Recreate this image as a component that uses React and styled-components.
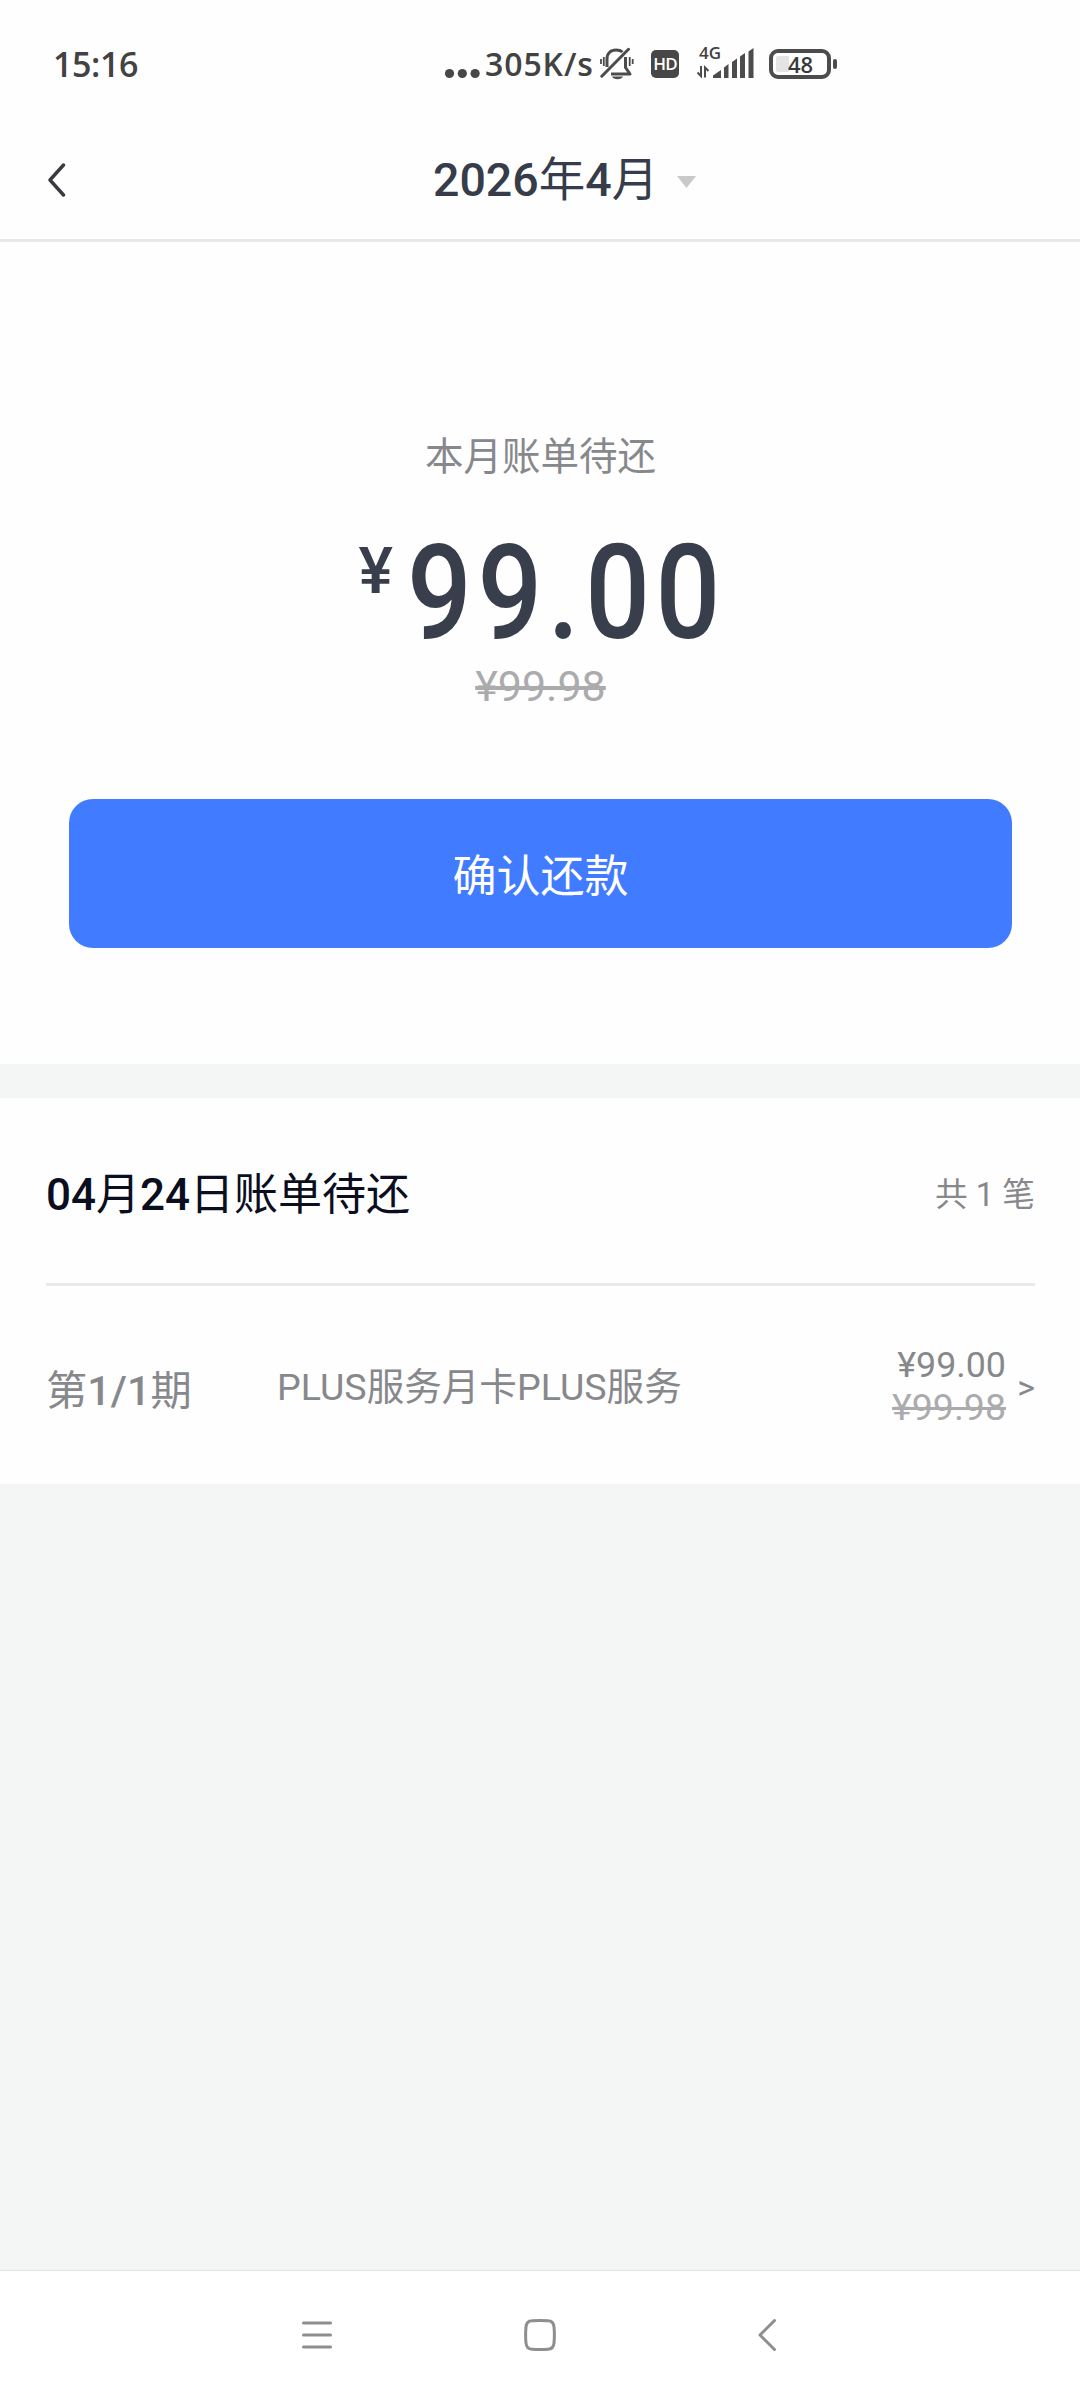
import React from 'react';
import styled, {createGlobalStyle} from 'styled-components';

const GlobalStyle = createGlobalStyle`
  body {
    margin: 0;
    background-color: #f4f6f6;
    font-family: Roboto, 'Noto Sans CJK SC', sans-serif;
  }
  * {
    box-sizing: border-box;
  }
`

const Screen = styled.div`
  width: 1080px;
  height: 2400px;
  display: flex;
  flex-direction: column;
  background-color: #f4f6f6;
`

const StatusBar = styled.div`
  height: 120px;
  padding: 0 0 0 53px;
  display: flex;
  align-items: flex-start;
  background-color: #fefefe;
  color: #424242;
  font-family: 'Open Sans', sans-serif;
  font-weight: 600;
`

const Clock = styled.span`
  width: 391px;
  margin-top: 40px;
  font-size: 34px;
  line-height: 48px;
  letter-spacing: -0.4px;
`

const Speed = styled.span`
  width: 115px;
  margin: 40px 0 0 5px;
  font-size: 32px;
  line-height: 48px;
  letter-spacing: 0.9px;
`

const StatusIcon = styled.svg`
  flex: none;
  margin-top: ${props => props.$top}px;
`

const HdBadge = styled.span`
  width: 28px;
  height: 28px;
  margin: 50px 0 0 17px;
  border-radius: 5px;
  background-color: #474747;
  color: white;
  font-size: 17px;
  font-weight: 600;
  line-height: 28px;
  text-align: center;
  letter-spacing: -0.8px;
`

const Signal = styled.div`
  width: 57px;
  height: 32px;
  margin: 47px 0 0 18px;
  display: grid;
  grid-template: 14px 18px / 16px 41px;
`

const NetworkType = styled.span`
  padding-left: 2px;
  font-size: 17px;
  line-height: 12px;
  white-space: nowrap;
`

const Bars = styled.svg`
  grid-area: 1 / 2 / 3 / 3;
`

const Battery = styled.div`
  width: 62px;
  height: 30px;
  margin: 49px 0 0 15px;
  padding: 3px;
  border: 4px solid #4c4c4c;
  border-radius: 9px;
`

const BatteryLevel = styled.div`
  height: 16px;
  border-radius: 2px;
  background: linear-gradient(to right, #e4e4e4 13px, transparent 13px);
  font-size: 22px;
  line-height: 17px;
  text-align: center;
  padding-left: 1px;
  color: #3a3a3a;
`

const BatteryTip = styled.span`
  width: 4px;
  height: 10px;
  margin: 59px 0 0 2px;
  border-radius: 2px;
  background-color: #4c4c4c;
`

const Header = styled.header`
  height: 122px;
  padding: 0 48px;
  display: grid;
  grid-template-columns: 385px 1fr;
  align-items: center;
  border-bottom: 3px solid #e8e8e8;
  background-color: #fefefe;
`

const MonthPicker = styled.div`
  display: flex;
  align-items: center;
  color: #363c49;
  font-size: 46.5px;
  font-weight: 500;
  line-height: 60px;
`

const Thin = styled.span`
  font-weight: 400;
`

const Caret = styled.svg`
  margin: 4px 0 0 19px;
`

const Summary = styled.section`
  height: 822px;
  padding: 185px 68px 0 69px;
  display: flex;
  flex-direction: column;
  align-items: center;
  background-color: #fefefe;
`

const SummaryLabel = styled.p`
  margin: 0;
  color: #87888c;
  font-size: 38.5px;
  line-height: 60px;
`

const Amount = styled.div`
  display: flex;
  align-items: flex-start;
  height: 138px;
  margin-top: 37px;
  color: #383e4b;
  font-weight: 500;
`

const Currency = styled.span`
  width: 48px;
  margin-top: 9px;
  font-size: 65px;
  line-height: 76px;
`

/* narrowed digits, spaced back out to the usual pitch */
const AmountValue = styled.span`
  width: 316px;
  font-size: 131px;
  line-height: 138px;
  letter-spacing: 6.5px;
  transform: scaleX(0.87);
  transform-origin: left;
`

const OldPrice = styled.span`
  color: #ababae;
  text-decoration: line-through;
  text-decoration-thickness: ${props => props.$line || 3}px;
  font-size: ${props => props.$size}px;
  line-height: ${props => props.$height}px;
`

const PayButton = styled.button`
  width: 943px;
  height: 149px;
  margin-top: 89px;
  padding: 6px 0 0;
  border: 0;
  border-radius: 24px;
  background-color: #417bff;
  color: white;
  font-family: inherit;
  font-size: 44px;
  line-height: 60px;
`

const Bill = styled.section`
  height: 386px;
  margin-top: 34px;
  padding: 0 45px 0 46px;
  background-color: #fefefe;
`

const BillHead = styled.div`
  height: 188px;
  padding-top: 8px;
  display: flex;
  align-items: center;
  justify-content: space-between;
  border-bottom: 3px solid #eaeaea;
`

const BillTitle = styled.h2`
  margin: 0;
  color: #0a0e1e;
  font-size: 44px;
  font-weight: 500;
  line-height: 60px;
`

const BillCount = styled.span`
  color: #87888c;
  font-size: 32.7px;
  line-height: 50px;
`

const BillRow = styled.div`
  height: 198px;
  padding-top: 4px;
  display: grid;
  grid-template-columns: 231px 1fr auto 29px;
  align-items: center;
  color: #87888c;
`

const Period = styled.span`
  padding-top: 7px;
  font-size: 41.3px;
  font-weight: 500;
  line-height: 60px;
`

const ItemName = styled.span`
  font-size: 37.6px;
  line-height: 60px;
`

const Prices = styled.div`
  padding-bottom: 2px;
  display: flex;
  flex-direction: column;
  align-items: flex-end;
`

const Price = styled.span`
  font-size: 35.8px;
  line-height: 42px;
`

const More = styled.span`
  text-align: right;
  font-size: 34px;
  line-height: 40px;
`

const NavBar = styled.nav`
  height: 130px;
  margin-top: auto;
  padding: 0 302px 2px;
  display: grid;
  grid-template-columns: 222px 234px 20px;
  align-items: center;
  border-top: 1px solid #dfe4e3;
  background-color: white;
`

const Bell = () => (
  <StatusIcon $top={47} width="34" height="33" viewBox="0 0 34 33" fill="none" stroke="#4c4c4c" strokeWidth="3">
    <path d="M7 20V12C7 6.500 10.500 3 16 3C19 3 21 3.600 22.500 5" />
    <path d="M25.500 10V20.500L30 27H11" strokeLinejoin="round" />
    <path d="M28.500 2.300L1.800 29.200" strokeLinecap="round" />
    <path d="M12 29.500H23C21.500 33 13.500 33 12 29.500Z" fill="#4c4c4c" stroke="none" />
    <path d="M1 12V17M3.800 10V19M29.700 10V19M32.700 12V17" strokeWidth="1.800" />
  </StatusIcon>
)

function App() {
  return (
    <Screen>
      <GlobalStyle />
      <StatusBar>
        <Clock>15:16</Clock>
        <StatusIcon $top={68} width="36" height="11" viewBox="0 0 36 11" fill="#474747">
          <circle cx="5.500" cy="5.500" r="4.600" />
          <circle cx="18.300" cy="5.500" r="4.600" />
          <circle cx="31.100" cy="5.500" r="4.600" />
        </StatusIcon>
        <Speed>305K/s</Speed>
        <Bell />
        <HdBadge>HD</HdBadge>
        <Signal>
          <NetworkType>4G</NetworkType>
          <Bars width="41" height="32" viewBox="0 0 41 32" fill="#4c4c4c">
            <path d="M0 31V28.500L8 23V31Z" />
            <path d="M11 31V20.500L15.500 17V31Z" />
            <path d="M19 31V15L24 11.500V31Z" />
            <path d="M27 31V9.500L32 6V31Z" />
            <path d="M35.500 31V4.500L40.500 1V31Z" />
          </Bars>
          <svg width="14" height="18" viewBox="0 0 14 18" fill="none" stroke="#4c4c4c" strokeWidth="2">
            <path d="M4 5V15L0.500 11.500M8 16.500V6.500L11.500 10" />
          </svg>
        </Signal>
        <Battery>
          <BatteryLevel>48</BatteryLevel>
        </Battery>
        <BatteryTip />
      </StatusBar>

      <Header>
        <svg width="18" height="36" viewBox="0 0 18 36" fill="none" stroke="#3a3b40" strokeWidth="3.400" strokeLinecap="round" strokeLinejoin="round">
          <path d="M15.500 3L2 18L15.500 33" />
        </svg>
        <MonthPicker>
          2026<Thin>年</Thin>4<Thin>月</Thin>
          <Caret width="19" height="12" viewBox="0 0 19 12" fill="#c9c9c9">
            <path d="M0 0H19L9.500 12Z" />
          </Caret>
        </MonthPicker>
      </Header>

      <Summary>
        <SummaryLabel>本月账单待还</SummaryLabel>
        <Amount>
          <Currency>¥</Currency>
          <AmountValue>99.00</AmountValue>
        </Amount>
        <OldPrice $size={43} $height={48} $line={4}>¥99.98</OldPrice>
        <PayButton>确认还款</PayButton>
      </Summary>

      <Bill>
        <BillHead>
          <BillTitle>04<Thin>月</Thin>24<Thin>日账单待还</Thin></BillTitle>
          <BillCount>共 1 笔</BillCount>
        </BillHead>
        <BillRow>
          <Period><Thin>第</Thin>1/1<Thin>期</Thin></Period>
          <ItemName>PLUS服务月卡PLUS服务</ItemName>
          <Prices>
            <Price>¥99.00</Price>
            <OldPrice $size={37.5} $height={42}>¥99.98</OldPrice>
          </Prices>
          <More>&gt;</More>
        </BillRow>
      </Bill>

      <NavBar>
        <svg width="30" height="32" viewBox="0 0 30 32" stroke="#8e8e8e" strokeWidth="3" strokeLinecap="round">
          <path d="M1.500 4H28.500M1.500 16H28.500M1.500 28H28.500" />
        </svg>
        <svg width="32" height="34" viewBox="0 0 32 34" fill="none" stroke="#8e8e8e" strokeWidth="3">
          <path d="M8 2.800Q16 2 24 2.800Q29.500 3 30 9Q30.800 17 30 25Q29.500 31 24 31.200Q16 32 8 31.200Q2.500 31 2 25Q1.200 17 2 9Q2.500 3 8 2.800Z" />
        </svg>
        <svg width="20" height="34" viewBox="0 0 20 34" fill="none" stroke="#8e8e8e" strokeWidth="3" strokeLinecap="round" strokeLinejoin="round">
          <path d="M16.500 2.500L2 17L16.500 31.500" />
        </svg>
      </NavBar>
    </Screen>
  );
}

export default App;
